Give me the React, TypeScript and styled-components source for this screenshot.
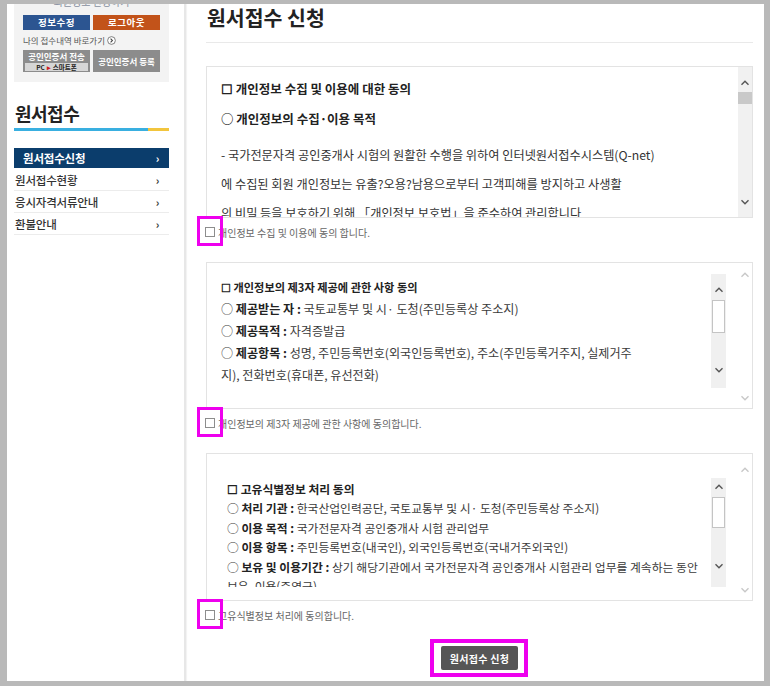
import React from "react";
import styled, { createGlobalStyle } from "styled-components";

const GlobalStyle = createGlobalStyle`
  html, body {
    margin: 0;
    padding: 0;
    background: #b9b9b9;
  }
  body {
    font-family: "Noto Sans CJK KR", "Noto Sans", sans-serif;
    color: #333;
  }
  * {
    box-sizing: border-box;
  }
`;

const Frame = styled.div`
  height: 686px;
  padding: 4px 6px 5px 7px;
`;

const Panel = styled.div`
  display: flex;
  height: 677px;
  background: #fff;
  overflow: hidden;
`;

/* ---------- sidebar ---------- */

const Sidebar = styled.aside`
  width: 177px;
  flex-shrink: 0;
  padding: 0 15px 0 7px;
`;

const Divider = styled.div`
  width: 2px;
  flex-shrink: 0;
  background: #e7e7e7;
  box-shadow: 1px 0 1px #f2f2f2;
`;

const MemberBox = styled.div`
  height: 78px;
  background: #f3f3f3;
  padding: 0 9px;
`;

const ClippedLine = styled.div`
  height: 4px;
  overflow: hidden;
  text-align: center;
  font-size: 10px;
  line-height: 12px;
  color: #8890a0;
  span {
    display: block;
    margin-top: -8px;
  }
`;

const BtnRow = styled.div<{ $top: number }>`
  display: grid;
  grid-template-columns: 67px 67px;
  column-gap: 3px;
  margin-top: ${(p) => p.$top}px;
`;

const MemberBtn = styled.div<{ $bg: string }>`
  height: 15px;
  background: ${(p) => p.$bg};
  color: #fff;
  font-size: 9.5px;
  font-weight: 700;
  line-height: 15px;
  text-align: center;
  letter-spacing: 0.5px;
`;

const ShortcutLink = styled.div`
  display: flex;
  align-items: center;
  gap: 2px;
  height: 12px;
  margin-top: 4px;
  font-size: 8.5px;
  color: #555;
`;

const CertBtn = styled.div`
  display: flex;
  flex-direction: column;
  justify-content: center;
  height: 22px;
  background: #8c8c8c;
  color: #fff;
  font-size: 8.5px;
  font-weight: 700;
  text-align: center;
`;

const CertTop = styled.div`
  line-height: 13px;
`;

const CertStrip = styled.div`
  display: flex;
  justify-content: center;
  align-items: center;
  gap: 2px;
  height: 8px;
  margin: 0 2px 1px;
  background: #d6d6d6;
  color: #222;
  font-size: 6.5px;
  line-height: 8px;
  b {
    color: #d02020;
  }
`;

const SideTitle = styled.h2`
  margin: 19px 0 0 1px;
  font-size: 18px;
  line-height: 24px;
  font-weight: 700;
  letter-spacing: -0.5px;
  color: #222;
`;

const TitleBar = styled.div`
  display: flex;
  height: 3px;
  margin-top: 3px;
  span:first-child {
    flex: 1;
    background: #39afe0;
  }
  span:last-child {
    width: 21px;
    background: #f2c53d;
  }
`;

const Menu = styled.ul`
  list-style: none;
  margin: 17px 0 0;
  padding: 0;
`;

const MenuItem = styled.li<{ $active?: boolean }>`
  display: flex;
  align-items: center;
  justify-content: space-between;
  height: ${(p) => (p.$active ? "20px" : "22px")};
  margin-bottom: ${(p) => (p.$active ? "1px" : "0")};
  padding: ${(p) => (p.$active ? "0 10px 0 9px" : "0 10px 0 1px")};
  background: ${(p) => (p.$active ? "#0b3d6c" : "transparent")};
  border-bottom: ${(p) => (p.$active ? "none" : "1px solid #ececec")};
  color: ${(p) => (p.$active ? "#fff" : "#333")};
  font-size: 11.5px;
  font-weight: ${(p) => (p.$active ? 700 : 500)};
  letter-spacing: -0.2px;
  em {
    font-style: normal;
    font-weight: 700;
    font-size: 11px;
  }
`;

/* ---------- main ---------- */

const Main = styled.main`
  flex: 1;
  padding: 0 11px 0 20px;
`;

const PageTitle = styled.h1`
  margin: 0 0 0 1px;
  padding-top: 1px;
  font-size: 20.5px;
  line-height: 25px;
  font-weight: 700;
  color: #222;
`;

const Rule = styled.div`
  height: 1px;
  margin-top: 12px;
  background: #e9e9e9;
`;

const ScrollBox = styled.div<{ $h: number; $top: number }>`
  display: flex;
  height: ${(p) => p.$h}px;
  margin-top: ${(p) => p.$top}px;
  border: 1px solid #e3e3e3;
  background: #fff;
`;

const BoxBody = styled.div`
  flex: 1;
  min-width: 0;
  overflow: hidden;
  padding: 12px 14px 0;
  font-size: 12.2px;
  color: #333;
`;

const Line = styled.div<{ $lh: number; $top?: number; $bold?: boolean; $size?: number }>`
  margin-top: ${(p) => p.$top ?? 0}px;
  line-height: ${(p) => p.$lh}px;
  font-weight: ${(p) => (p.$bold ? 700 : 400)};
  ${(p) => (p.$size ? `font-size: ${p.$size}px;` : "")}
  white-space: nowrap;
  color: ${(p) => (p.$bold ? "#222" : "inherit")};
  b {
    font-weight: 700;
    color: #222;
  }
`;

const OuterBody = styled.div<{ $top: number }>`
  flex: 1;
  min-width: 0;
  padding: ${(p) => p.$top}px 12px 0 0;
`;

const InnerBox = styled.div<{ $h: number }>`
  display: flex;
  height: ${(p) => p.$h}px;
`;

const InnerText = styled.div<{ $size: number; $pad: number; $left: number }>`
  flex: 1;
  min-width: 0;
  overflow: hidden;
  padding: ${(p) => p.$pad}px 0 0 ${(p) => p.$left}px;
  font-size: ${(p) => p.$size}px;
  color: #3a3a3a;
`;

const Track = styled.div<{ $bg: string; $pt: number; $pb: number; $w: number }>`
  display: flex;
  flex-direction: column;
  align-items: center;
  width: ${(p) => p.$w}px;
  flex-shrink: 0;
  padding: ${(p) => p.$pt}px 0 ${(p) => p.$pb}px;
  background: ${(p) => p.$bg};
`;

const Thumb = styled.div<{ $top: number; $h: number; $outline?: boolean }>`
  width: ${(p) => (p.$outline ? "13px" : "14px")};
  height: ${(p) => p.$h}px;
  margin-top: ${(p) => p.$top}px;
  background: ${(p) => (p.$outline ? "#fff" : "#c9c9c9")};
  border: ${(p) => (p.$outline ? "1px solid #c4c4c4" : "none")};
`;

const Spacer = styled.div`
  flex: 1;
`;

type Arrow = "up" | "down";

function Chevron({ dir, color }: { dir: Arrow; color: string }) {
  return (
    <svg width="10" height="10" viewBox="0 0 10 10" style={{ flexShrink: 0 }}>
      <path
        d={dir === "up" ? "M1.5 6.8 L5 3.3 L8.5 6.8" : "M1.5 3.2 L5 6.7 L8.5 3.2"}
        fill="none"
        stroke={color}
        strokeWidth="1.4"
      />
    </svg>
  );
}

type ScrollProps = {
  bg?: string;
  arrow?: string;
  width?: number;
  padTop: number;
  padBottom: number;
  thumbTop?: number;
  thumbH?: number;
  outline?: boolean;
};

function Scrollbar(p: ScrollProps) {
  return (
    <Track $bg={p.bg ?? "transparent"} $pt={p.padTop} $pb={p.padBottom} $w={p.width ?? 14}>
      <Chevron dir="up" color={p.arrow ?? "#555"} />
      {p.thumbH ? <Thumb $top={p.thumbTop ?? 0} $h={p.thumbH} $outline={p.outline} /> : null}
      <Spacer />
      <Chevron dir="down" color={p.arrow ?? "#555"} />
    </Track>
  );
}

const AgreeRow = styled.label`
  display: flex;
  align-items: center;
  height: 28px;
  font-size: 10px;
  color: #666;
`;

const CheckBox = styled.span`
  position: relative;
  width: 10px;
  height: 10px;
  margin: 0 3px 0 -1px;
  border: 1px solid #8d8d8d;
  background: #fff;
`;

const Highlight = styled.span<{ $l: number; $t: number; $w: number; $h: number; $b: number }>`
  position: absolute;
  z-index: 2;
  left: ${(p) => p.$l}px;
  top: ${(p) => p.$t}px;
  width: ${(p) => p.$w}px;
  height: ${(p) => p.$h}px;
  border: ${(p) => p.$b}px solid #ee00ee;
  pointer-events: none;
`;

const Gap = styled.div<{ $h: number }>`
  height: ${(p) => p.$h}px;
`;

const SubmitArea = styled.div`
  display: flex;
  justify-content: center;
  margin-top: 17px;
`;

const SubmitBtn = styled.button`
  position: relative;
  width: 77px;
  height: 24px;
  border: none;
  border-radius: 2px;
  background: #565656;
  color: #fff;
  font-family: inherit;
  font-size: 10px;
  font-weight: 700;
  letter-spacing: 0.3px;
  padding: 0;
`;

function Agree({ text }: { text: string }) {
  return (
    <AgreeRow>
      <CheckBox>
        <Highlight $l={-9} $t={-12} $w={26} $h={30} $b={3} />
      </CheckBox>
      {text}
    </AgreeRow>
  );
}

const menu = ["원서접수신청", "원서접수현황", "응시자격서류안내", "환불안내"];

export default function App() {
  return (
    <Frame>
      <GlobalStyle />
      <Panel>
        <Sidebar>
          <MemberBox>
            <ClippedLine>
              <span>회원정보 변경하기</span>
            </ClippedLine>
            <BtnRow $top={7}>
              <MemberBtn $bg="#2c5591">정보수정</MemberBtn>
              <MemberBtn $bg="#c2531a">로그아웃</MemberBtn>
            </BtnRow>
            <ShortcutLink>
              나의 접수내역 바로가기
              <svg width="9" height="9" viewBox="0 0 10 10">
                <circle cx="5" cy="5" r="4.3" fill="#fff" stroke="#666" strokeWidth="0.9" />
                <path d="M4 3 L6 5 L4 7" fill="none" stroke="#444" strokeWidth="1.2" />
              </svg>
            </ShortcutLink>
            <BtnRow $top={4}>
              <CertBtn>
                <CertTop>공인인증서 전송</CertTop>
                <CertStrip>
                  PC <b>▸</b> 스마트폰
                </CertStrip>
              </CertBtn>
              <CertBtn>공인인증서 등록</CertBtn>
            </BtnRow>
          </MemberBox>

          <SideTitle>원서접수</SideTitle>
          <TitleBar>
            <span />
            <span />
          </TitleBar>

          <Menu>
            {menu.map((m, i) => (
              <MenuItem key={m} $active={i === 0}>
                {m}
                <em>›</em>
              </MenuItem>
            ))}
          </Menu>
        </Sidebar>

        <Divider />

        <Main>
          <PageTitle>원서접수 신청</PageTitle>
          <Rule />

          {/* 1. 개인정보 수집 및 이용 */}
          <ScrollBox $h={152} $top={23}>
            <BoxBody>
              <Line $lh={20} $bold $size={12.5}>☐ 개인정보 수집 및 이용에 대한 동의</Line>
              <Line $lh={20} $top={10} $bold $size={12.5}>○ 개인정보의 수집·이용 목적</Line>
              <Line $lh={29} $top={12}>
                - 국가전문자격 공인중개사 시험의 원활한 수행을 위하여 인터넷원서접수시스템(Q-net)
              </Line>
              <Line $lh={29}>에 수집된 회원 개인정보는 유출?오용?남용으로부터 고객피해를 방지하고 사생활</Line>
              <Line $lh={29}>의 비밀 등을 보호하기 위해 「개인정보 보호법」을 준수하여 관리합니다</Line>
            </BoxBody>
            <Scrollbar bg="#f1f1f1" padTop={11} padBottom={10} thumbTop={4} thumbH={12} />
          </ScrollBox>
          <Agree text="개인정보 수집 및 이용에 동의 합니다." />

          {/* 2. 제3자 제공 */}
          <ScrollBox $h={147} $top={16}>
            <OuterBody $top={11}>
              <InnerBox $h={114}>
                <InnerText $size={12.1} $pad={2} $left={14}>
                  <Line $lh={22} $bold $size={11.2}>☐ 개인정보의 제3자 제공에 관한 사항 동의</Line>
                  <Line $lh={22}>
                    ○ <b>제공받는 자 :</b> 국토교통부 및 시· 도청(주민등록상 주소지)
                  </Line>
                  <Line $lh={22}>
                    ○ <b>제공목적 :</b> 자격증발급
                  </Line>
                  <Line $lh={22}>
                    ○ <b>제공항목 :</b> 성명, 주민등록번호(외국인등록번호), 주소(주민등록거주지, 실제거주
                  </Line>
                  <Line $lh={22}>지), 전화번호(휴대폰, 유선전화)</Line>
                </InnerText>
                <Scrollbar
                  bg="#f0f0f0"
                  width={15}
                  padTop={11}
                  padBottom={13}
                  thumbTop={5}
                  thumbH={33}
                  outline
                />
              </InnerBox>
            </OuterBody>
            <Scrollbar arrow="#c8c8c8" padTop={7} padBottom={5} />
          </ScrollBox>
          <Agree text="개인정보의 제3자 제공에 관한 사항에 동의합니다." />

          {/* 3. 고유식별정보 */}
          <ScrollBox $h={148} $top={16}>
            <OuterBody $top={24}>
              <InnerBox $h={109}>
                <InnerText $size={11.8} $pad={1} $left={20}>
                  <Line $lh={19.4} $bold>☐ 고유식별정보 처리 동의</Line>
                  <Line $lh={19.4}>
                    ○ <b>처리 기관 :</b> 한국산업인력공단, 국토교통부 및 시· 도청(주민등록상 주소지)
                  </Line>
                  <Line $lh={19.4}>
                    ○ <b>이용 목적 :</b> 국가전문자격 공인중개사 시험 관리업무
                  </Line>
                  <Line $lh={19.4}>
                    ○ <b>이용 항목 :</b> 주민등록번호(내국인), 외국인등록번호(국내거주외국인)
                  </Line>
                  <Line $lh={19.4}>
                    ○ <b>보유 및 이용기간 :</b> 상기 해당기관에서 국가전문자격 공인중개사 시험관리 업무를 계속하는 동안
                  </Line>
                  <Line $lh={19.4}>보유, 이용(준영구)</Line>
                </InnerText>
                <Scrollbar
                  bg="#f0f0f0"
                  width={15}
                  padTop={4}
                  padBottom={16}
                  thumbTop={5}
                  thumbH={31}
                  outline
                />
              </InnerBox>
            </OuterBody>
            <Scrollbar arrow="#c8c8c8" padTop={11} padBottom={5} />
          </ScrollBox>
          <Agree text="고유식별정보 처리에 동의합니다." />

          <SubmitArea>
            <SubmitBtn type="button">
              원서접수 신청
              <Highlight $l={-11} $t={-7} $w={98} $h={38} $b={4} />
            </SubmitBtn>
          </SubmitArea>
          <Gap $h={10} />
        </Main>
      </Panel>
    </Frame>
  );
}
